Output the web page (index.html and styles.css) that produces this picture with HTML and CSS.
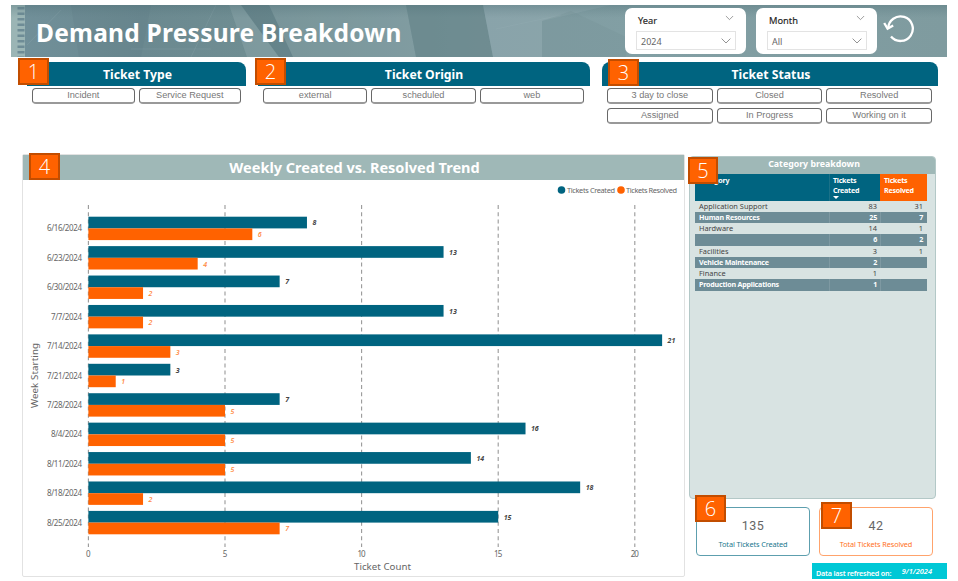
FILE: index.html
```html
<!DOCTYPE html>
<html lang="en">
<head>
<meta charset="utf-8">
<title>Demand Pressure Breakdown</title>
<link rel="stylesheet" href="styles.css">
</head>
<body>
<div class="report">
  <header class="banner">
    <svg class="banner-art" viewBox="0 0 936 52" preserveAspectRatio="none" aria-hidden="true">
      <defs>
        <linearGradient id="sky" x1="0" x2="1" y1="0" y2="0">
          <stop offset="0" stop-color="#71909a"/><stop offset=".14" stop-color="#6b8990"/>
          <stop offset=".25" stop-color="#6f8d92"/><stop offset=".5" stop-color="#809ca2"/>
          <stop offset=".67" stop-color="#829fa4"/><stop offset="1" stop-color="#7f9b9f"/>
        </linearGradient>
        <linearGradient id="shade" x1="0" x2="0" y1="0" y2="1">
          <stop offset="0" stop-color="#4c6d74" stop-opacity=".35"/><stop offset=".25" stop-color="#5b7b82" stop-opacity="0"/>
        </linearGradient>
      </defs>
      <rect width="936" height="52" fill="url(#sky)"/>
      <path d="M0 0H14V52H0Z" fill="#9bb5b5"/>
      <path d="M10 0V52" stroke="#6e8c96" stroke-width="7" stroke-dasharray="2.5 3" stroke-dashoffset="-2"/>
      <path d="M60 0H140L130 52H68Z" fill="#5b7a82" opacity=".2"/>
      <path d="M218 0H230L268 52H236Z" fill="#8ba5aa" opacity=".5"/>
      <path d="M230 0H258L282 52H268Z" fill="#4f7178" opacity=".35"/>
      <path d="M258 0H395L405 52H282Z" fill="#8aa5aa" opacity=".3"/>
      <path d="M395 0H472L482 52H405Z" fill="#668489" opacity=".65"/>
      <path d="M472 0H600L531 16V52H482Z" fill="#94aeb3" opacity=".45"/>
      <path d="M560 6L615 32V52H531V16Z" fill="#728e93" opacity=".25"/>
      <path d="M16 40L50 5M180 52L205 0M485 24L550 10M120 44H200" fill="none" stroke="#a3b9bd" stroke-width=".6" opacity=".3"/>
      <rect width="936" height="52" fill="url(#shade)"/>
    </svg>
    <h1>Demand Pressure Breakdown</h1>
    <div class="slicer">
      <div class="slicer-head"><span>Year</span><svg class="chev" viewBox="0 0 10 6"><path d="M1 .8L5 4.8L9 .8"/></svg></div>
      <div class="slicer-box"><span>2024</span><svg class="chev" viewBox="0 0 10 6"><path d="M.6 .6L5 5L9.4 .6"/></svg></div>
    </div>
    <div class="slicer">
      <div class="slicer-head"><span>Month</span><svg class="chev" viewBox="0 0 10 6"><path d="M1 .8L5 4.8L9 .8"/></svg></div>
      <div class="slicer-box"><span>All</span><svg class="chev" viewBox="0 0 10 6"><path d="M.6 .6L5 5L9.4 .6"/></svg></div>
    </div>
    <svg class="reset" viewBox="0 0 32 30"><path d="M5.2 14.5A12.3 12.3 0 1 1 8 22.5"/><path d="M1.2 9L4.6 14.6L10.2 11.6"/></svg>
  </header>

  <div class="filters">
    <section class="filter type">
      <h2>Ticket Type</h2>
      <div class="chips two"><button>Incident</button><button>Service Request</button></div>
      <b class="badge b1">1</b>
    </section>
    <section class="filter origin">
      <h2>Ticket Origin</h2>
      <div class="chips"><button>external</button><button>scheduled</button><button>web</button></div>
      <b class="badge b2">2</b>
    </section>
    <section class="filter status">
      <h2>Ticket Status</h2>
      <div class="chips"><button>3 day to close</button><button>Closed</button><button>Resolved</button><button>Assigned</button><button>In Progress</button><button>Working on it</button></div>
      <b class="badge b3">3</b>
    </section>
  </div>

  <main class="content">
    <section class="trend">
      <h2>Weekly Created vs. Resolved Trend</h2>
      <svg id="chart" width="661" height="396" viewBox="23 180 661 396" role="img" aria-label="Weekly tickets created and resolved"></svg>
      <b class="badge b4">4</b>
    </section>
    <aside class="side">
      <section class="category">
        <h2>Category breakdown</h2>
        <table>
          <colgroup><col class="c1"><col class="c2"><col class="c3"></colgroup>
          <thead><tr><th>Category</th><th>Tickets<br>Created<i class="sort"></i></th><th class="res">Tickets<br>Resolved</th></tr></thead>
          <tbody>
            <tr><td>Application Support</td><td>83</td><td>31</td></tr>
            <tr><td>Human Resources</td><td>25</td><td>7</td></tr>
            <tr><td>Hardware</td><td>14</td><td>1</td></tr>
            <tr><td></td><td>6</td><td>2</td></tr>
            <tr><td>Facilities</td><td>3</td><td>1</td></tr>
            <tr><td>Vehicle Maintenance</td><td>2</td><td></td></tr>
            <tr><td>Finance</td><td>1</td><td></td></tr>
            <tr><td>Production Applications</td><td>1</td><td></td></tr>
          </tbody>
        </table>
        <b class="badge b5">5</b>
      </section>
      <div class="cards">
        <div class="card"><strong>135</strong><span>Total Tickets Created</span><b class="badge b6">6</b></div>
        <div class="card orange"><strong>42</strong><span>Total Tickets Resolved</span><b class="badge b7">7</b></div>
      </div>
      <div class="refresh"><span>Data last refreshed on:</span><em>9/1/2024</em></div>
    </aside>
  </main>
</div>
<script src="chart.js"></script>
</body>
</html>
```
FILE: styles.css
```css
* { box-sizing: border-box; }
body { margin: 0; background: #fff; font-family: "Noto Sans", "Open Sans", sans-serif; overflow: hidden; }
h1, h2 { margin: 0; }
.report { width: 958px; height: 581px; padding: 5px 11px 0; }

.banner { display: grid; grid-template-columns: 614px 121px 121px 32px; column-gap: 10px; height: 52px; align-items: start; }
.banner > * { grid-row: 1; }
.banner-art { grid-column: 1 / -1; width: 936px; height: 52px; display: block; }
.banner h1 { grid-column: 1; padding-left: 25px; color: #fff; font-size: 24.5px; line-height: 55px; letter-spacing: .24px; white-space: nowrap; z-index: 1; }
.slicer { height: 46px; margin-top: 3px; background: #fff; border-radius: 7px; padding: 5px 10px 0 11px; z-index: 1; }
.banner .slicer:nth-of-type(1) { grid-column: 2; margin-left: -10px; width: 121px; }
.banner .slicer:nth-of-type(2) { grid-column: 3; margin-left: -10px; width: 121px; }
.slicer-head { display: flex; justify-content: space-between; align-items: center; height: 14px; padding: 0 2px; font-size: 9.3px; color: #252423; -webkit-text-stroke: .15px #252423; }
.slicer-box { display: flex; justify-content: space-between; align-items: center; height: 19px; margin-top: 4px; padding: 2px 4px 0; border: 1px solid #e3e3e3; font-size: 9px; color: #666; }
.chev { width: 9px; height: 6px; fill: none; stroke: #777; stroke-width: .8; }
.slicer-head .chev { margin-top: -4px; }
.slicer-box .chev { width: 10px; margin-top: -2px; }
.reset { grid-column: 4; width: 32px; height: 30px; margin: 9px 0 0 -14px; fill: none; stroke: #fff; stroke-width: 2.3; z-index: 1; }

.filters { display: grid; grid-template-columns: 225px 332px 336px; column-gap: 12px; margin: 5px 0 0 10px; height: 93px; }
.filter { position: relative; }
.filter h2 { height: 24px; border-radius: 8px 8px 0 0; background: #006480; color: #fff; font: bold 12.2px/25px "Noto Sans", sans-serif; text-align: center; }
.filter.type h2 { margin-left: 6px; padding-left: 2px; border-top-left-radius: 0; }
.status h2 { padding-left: 2px; }
.chips { display: grid; grid-template-columns: repeat(3, 1fr); gap: 4px; padding: 2px 6px 0 5px; }
.chips.two { grid-template-columns: repeat(2, 1fr); padding: 2px 5px 0 11px; }
.chips button { height: 16px; padding: 0 0 1px; border: 1px solid #686868; border-bottom: 2px solid #999; border-radius: 4px; background: #fff; color: #777; font: 9.2px/12px "Liberation Sans", sans-serif; }

.badge { position: absolute; width: 31px; height: 27px; border: 2px solid #c24d00; background: #ff6200; color: #fff; font: 300 20px/23px "Open Sans", sans-serif; text-align: center; z-index: 3; }
.b1 { left: -3px; top: -4px; }
.b2 { left: -3px; top: -4px; }
.b3 { left: 6px; top: -3px; }
.b4 { left: 6px; top: -2px; }
.b5 { left: -2px; top: 0; width: 30px; }
.b6 { left: -2px; top: -13px; }
.b7 { left: 1px; top: -6px; }

.content { display: grid; grid-template-columns: 663px 258px; column-gap: 4px; margin-left: 11px; }
.trend { position: relative; height: 423px; border: 1px solid #e2e2e2; border-radius: 2px; margin-top: -1px; }
.trend h2 { height: 25px; padding-left: 2px; background: #9fb8b7; color: #fff; font: bold 14.5px/24px "Noto Sans", sans-serif; text-align: center; }
.trend svg { display: block; }
#chart text { fill: #666; font-size: 8px; }
#chart .val { font-size: 7px; font-style: italic; font-weight: 700; fill: #444; }
#chart .val.o { fill: #ff8b45; font-weight: 600; }
#chart .title { font-size: 9.7px; }
#chart .legend { font-size: 7.4px; }

.category { position: relative; width: 247px; height: 343px; margin-top: .5px; border: 1px solid #b3c8c7; border-radius: 4px; background: #d8e3e2; padding: 0 8px 0 5px; }
.category h2 { height: 17px; margin: 0 -8px 0 -5px; padding-left: 3px; background: #9fb8b7; color: #fff; font: bold 8.8px/15px "Noto Sans", sans-serif; text-align: center; border-radius: 3px 3px 0 0; }
table { width: 232px; table-layout: fixed; border-collapse: collapse; font-size: 7.4px; color: #444; }
.c1 { width: 134px; } .c2 { width: 51px; } .c3 { width: 47px; }
thead tr { height: 27px; }
th { background: #006480; color: #fff; text-align: left; vertical-align: top; font-size: 7.1px; line-height: 10px; letter-spacing: -.25px; padding: 1px 0 0 4px; }
.res { background: #ff6200; }
th:nth-child(2) { box-shadow: inset 1px 0 #1b7188; }
.sort { display: block; width: 0; height: 0; margin-top: 1px; border: 3px solid transparent; border-top-color: #fff; border-bottom: 0; }
td { height: 11.25px; padding: 0 4px; line-height: 11.25px; text-align: right; white-space: nowrap; }
td:first-child { text-align: left; }
td:nth-child(2) { padding-right: 3px; }
tbody tr:nth-child(even) td { background: #6d8c96; color: #fff; font-weight: 700; font-size: 7.1px; letter-spacing: -.2px; }
tbody tr:nth-child(even) td + td { box-shadow: inset 1px 0 #7e99a2; }

.cards { display: grid; grid-template-columns: 114px 114px; column-gap: 9px; margin: 8px 0 0 7px; }
.card { position: relative; height: 49px; border: 1px solid #5d9fae; border-radius: 4px; display: flex; flex-direction: column; align-items: center; color: #20788e; }
.card strong { margin-top: 9px; font: 400 12.5px/17px Roboto, sans-serif; color: #666; letter-spacing: .4px; }
.card > span { margin-top: 5px; font-size: 7.3px; line-height: 10px; letter-spacing: -.1px; white-space: nowrap; }
.card.orange { border-color: #ffa36c; color: #ff711c; }
.refresh { display: flex; align-items: center; justify-content: space-between; width: 135px; height: 16px; margin: 7px 0 0 123px; padding: 4px 15px 0 4px; background: #00c8d6; color: #fff; font-size: 7.2px; font-weight: 600; white-space: nowrap; }
.refresh em { margin-top: -3px; font-size: 7.4px; }
.refresh span { letter-spacing: -.2px; }
```
FILE: chart.js
```js
const weeks = [
  ["6/16/2024", 8, 6], ["6/23/2024", 13, 4], ["6/30/2024", 7, 2], ["7/7/2024", 13, 2],
  ["7/14/2024", 21, 3], ["7/21/2024", 3, 1], ["7/28/2024", 7, 5], ["8/4/2024", 16, 5],
  ["8/11/2024", 14, 5], ["8/18/2024", 18, 2], ["8/25/2024", 15, 7]
];
const chart = document.getElementById("chart");
const X0 = 88.4, UNIT = 27.32, PITCH = 29.42;

function add(tag, attrs, text) {
  const el = document.createElementNS("http://www.w3.org/2000/svg", tag);
  for (const key in attrs) el.setAttribute(key, attrs[key]);
  if (text !== undefined) el.textContent = text;
  chart.appendChild(el);
}

// Gridlines and horizontal axis
for (let v = 0; v <= 20; v += 5) {
  const x = X0 + v * UNIT;
  add("line", { x1: x, x2: x, y1: 205, y2: 547, stroke: "#999", "stroke-width": 1.1, "stroke-dasharray": "4 3.2" });
  add("text", { x: x, y: 557, "text-anchor": "middle", textLength: v < 10 ? 4.4 : 8.2 }, v);
}

// One pair of bars per week
weeks.forEach(([label, created, resolved], i) => {
  const y = 216.7 + i * PITCH;
  add("rect", { x: X0, y: y, width: created * UNIT, height: 11.7, fill: "#006480" });
  add("rect", { x: X0, y: y + 11.7, width: resolved * UNIT, height: 11.7, fill: "#ff6200" });
  add("text", { x: 82, y: y + 14.7, "text-anchor": "end", textLength: label.length === 9 ? 35 : label.length === 8 ? 31 : 31 }, label);
  add("text", { class: "val", x: X0 + created * UNIT + 5.5, y: y + 8.7 }, created);
  add("text", { class: "val o", x: X0 + resolved * UNIT + 5.5, y: y + 20.4 }, resolved);
});

add("text", { class: "title", x: 382.5, y: 569.5, "text-anchor": "middle", textLength: 57 }, "Ticket Count");
add("text", { class: "title", transform: "translate(37.5 375.5) rotate(-90)", "text-anchor": "middle", textLength: 65 }, "Week Starting");

// Legend
add("circle", { cx: 561.5, cy: 190, r: 3.8, fill: "#006480" });
add("text", { class: "legend", x: 567, y: 192.8, textLength: 48 }, "Tickets Created");
add("circle", { cx: 621, cy: 190, r: 3.8, fill: "#ff6200" });
add("text", { class: "legend", x: 626, y: 192.8, textLength: 51 }, "Tickets Resolved");
```
